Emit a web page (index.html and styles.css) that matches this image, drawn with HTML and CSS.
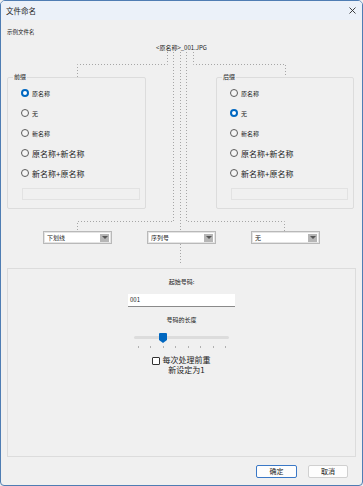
FILE: index.html
```html
<!DOCTYPE html>
<html lang="zh-CN">
<head>
  <meta charset="UTF-8" />
  <title>文件命名</title>
  <link rel="stylesheet" href="styles.css">
</head>
<body>
  <div class="window">
    <!-- connector lines from the sample name to each part -->
    <svg class="wires" width="363" height="486" viewBox="0 0 363 486">
      <g fill="none" stroke="#a6a6a6" stroke-width="1" stroke-dasharray="1 2">
        <path d="M167.5 52 V64.5 H77.5 V77" />
        <path d="M193.5 52 V64.5 H285.5 V77" />
        <path d="M173.5 52 V221.5 H77.5 V231" />
        <path d="M186.5 52 V221.5 H284.5 V231" />
        <path d="M180.5 52 V231" />
        <path d="M180.5 244 V263" />
      </g>
    </svg>

    <div class="titlebar">
      <span class="title">文件命名</span>
      <svg class="close" width="7" height="7" viewBox="0 0 7 7">
        <path d="M0.5 0.5 L6.5 6.5 M6.5 0.5 L0.5 6.5" stroke="#2b2b2b" stroke-width="0.9" />
      </svg>
    </div>

    <div class="content">
      <div class="caption">示例文件名</div>
      <div class="sample">&lt;原名称&gt;_001.JPG</div>

      <div class="groups">
        <fieldset class="group">
          <legend>前缀</legend>
          <div class="opt"><span class="radio on"></span>原名称</div>
          <div class="opt"><span class="radio"></span>无</div>
          <div class="opt"><span class="radio"></span>新名称</div>
          <div class="opt big"><span class="radio"></span>原名称+新名称</div>
          <div class="opt big"><span class="radio"></span>新名称+原名称</div>
          <div class="textbox"></div>
        </fieldset>
        <fieldset class="group right">
          <legend>后缀</legend>
          <div class="opt"><span class="radio"></span>原名称</div>
          <div class="opt"><span class="radio on"></span>无</div>
          <div class="opt"><span class="radio"></span>新名称</div>
          <div class="opt big"><span class="radio"></span>原名称+新名称</div>
          <div class="opt big"><span class="radio"></span>新名称+原名称</div>
          <div class="textbox"></div>
        </fieldset>
      </div>

      <div class="selects">
        <div class="select"><span>下划线</span><span class="arrow"></span></div>
        <div class="select"><span>序列号</span><span class="arrow"></span></div>
        <div class="select"><span>无</span><span class="arrow"></span></div>
      </div>

      <div class="panel">
        <div class="label">起始号码:</div>
        <div class="input">001</div>
        <div class="label len">号码的长度</div>
        <div class="slider">
          <div class="track"></div>
          <div class="thumb"></div>
          <div class="ticks">
            <span></span><span></span><span></span><span></span>
            <span></span><span></span><span></span><span></span>
          </div>
        </div>
        <div class="check">
          <span class="box"></span>
          <span class="check-text">每次处理前重新设定为1</span>
        </div>
      </div>

      <div class="buttons">
        <button class="btn primary">确定</button>
        <button class="btn">取消</button>
      </div>
    </div>
  </div>
</body>
</html>
```

FILE: styles.css
```css
* { box-sizing: border-box; }
html, body { margin: 0; padding: 0; }
body { font-family: "Noto Sans CJK SC", "Noto Sans", sans-serif; color: #1b1b1b; background: #f0f0f0; }

.window { position: relative; width: 363px; height: 486px; border: 1px solid #4f7db3; border-radius: 5px 5px 4px 4px; background: #f0f0f0; overflow: hidden; }
.wires { position: absolute; left: -1px; top: -1px; pointer-events: none; }

/* title bar */
.titlebar { height: 19px; display: flex; align-items: center; justify-content: space-between; padding: 0 6px 0 5px; background: #ebf1f9; font-size: 7.5px; }
.close { display: block; }

.content { padding: 0 6px; }
.caption { margin-top: 8px; font-size: 5.5px; line-height: 8px; }
.sample { margin-top: 8px; font-size: 6px; line-height: 8px; text-align: center; }

/* prefix / suffix groups */
.groups { display: flex; gap: 70px; margin-top: 21px; }
.group { width: 139px; margin: 0; padding: 2px 5px 8px 5px; border: 1px solid #dcdcdc; border-radius: 2px; min-width: 0; }
.group.right { width: 138px; }
.group legend { padding: 0 1px; font-size: 6px; line-height: 8px; }
.opt { display: flex; align-items: center; gap: 3px; height: 20px; padding-left: 8px; font-size: 6px; }
.opt.big { font-size: 8px; }
.radio { width: 8px; height: 8px; border: 1px solid #5c5c5c; border-radius: 50%; background: #f5f5f5; flex: none; }
.radio.on { border: 2.5px solid #0067c0; background: #fff; }
.textbox { height: 12px; margin: 5px 0 0 9px; border: 1px solid #e2e2e2; background: #f0f0f0; }

/* separator / sequence drop downs */
.selects { display: flex; justify-content: center; gap: 35px; margin-top: 22px; }
.select { width: 69px; height: 13px; display: flex; align-items: center; justify-content: space-between; padding: 0 2px 0 3px; border: 1px solid #b9b9b9; box-shadow: inset 0 0 0 1px #e4e4e4; background: #fff; font-size: 6px; }
.arrow { width: 9px; height: 8px; background: #b6b6b6; display: flex; align-items: center; justify-content: center; }
.arrow::after { content: ""; border-top: 3px solid #555; border-left: 3px solid transparent; border-right: 3px solid transparent; }

/* numbering panel */
.panel { height: 189px; margin-top: 24px; padding-top: 9px; border: 1px solid #dcdcdc; display: flex; flex-direction: column; align-items: center; }
.label { font-size: 6px; line-height: 8px; }
.label.len { margin-top: 9px; }
.input { width: 107px; height: 13px; margin-top: 8px; padding-left: 2px; background: #fff; border-bottom: 1px solid #8a8a8a; font-size: 6px; line-height: 12px; }
.slider { position: relative; width: 95px; height: 20px; margin-top: 6px; }
.track { position: absolute; left: 0; right: 0; top: 6px; height: 3px; border-radius: 2px; background: #dcdcdc; }
.thumb { position: absolute; left: 25px; top: 3px; width: 8px; height: 10px; background: #0067c0; clip-path: polygon(0 0, 100% 0, 100% 70%, 50% 100%, 0 70%); border-radius: 1px; }
.ticks { position: absolute; left: 4px; right: 3px; top: 16px; display: flex; justify-content: space-between; }
.ticks span { width: 1px; height: 2px; background: #b0b0b0; }
.check { display: flex; align-items: flex-start; gap: 2px; margin-top: 5px; }
.box { width: 8px; height: 8px; margin-top: 2px; border: 1px solid #333; border-radius: 1px; background: #fff; flex: none; }
.check-text { width: 49px; font-size: 8px; line-height: 10px; text-align: center; }

/* dialog buttons */
.buttons { display: flex; justify-content: flex-end; gap: 11px; margin-top: 8px; padding-right: 8px; }
.btn { width: 40px; height: 13px; padding: 0; border: 1px solid #d0d0d0; border-radius: 2px; background: #fdfdfd; font-family: inherit; font-size: 7px; line-height: 11px; color: #1b1b1b; }
.btn.primary { width: 41px; border-color: #3a78c6; }
```
